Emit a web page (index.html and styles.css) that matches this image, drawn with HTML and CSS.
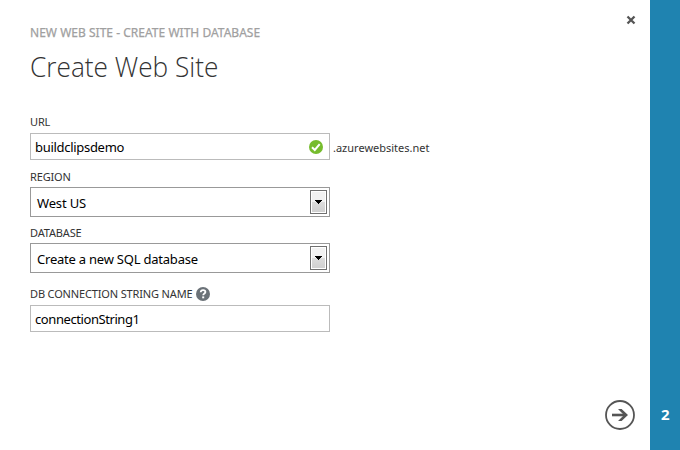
FILE: index.html
```html
<!DOCTYPE html>
<html lang="en">
<head>
<meta charset="utf-8">
<title>Create Web Site</title>
<link rel="stylesheet" href="styles.css">
</head>
<body>
<div class="wizard">
  <main class="panel">
    <button class="close" aria-label="Close">
      <svg width="10" height="10" viewBox="0 0 10 10"><path d="M1.5 1.5l7 7M8.5 1.5l-7 7" fill="none" stroke="#555" stroke-width="2.3"/></svg>
    </button>
    <p class="crumb">NEW WEB SITE - CREATE WITH DATABASE</p>
    <h1 class="title">Create Web Site</h1>
    <div class="label">URL</div>
    <div class="row">
      <div class="box input">
        <span class="v-url">buildclipsdemo</span>
        <svg width="14" height="14" viewBox="0 0 14 14"><circle cx="7" cy="7" r="7" fill="#76bc2d"/><path d="M3 7.2l2.8 2.8L10.7 4.2" fill="none" stroke="#fff" stroke-width="2"/></svg>
      </div>
      <span class="suffix">.azurewebsites.net</span>
    </div>
    <div class="label">REGION</div>
    <div class="box select">
      <span class="v-region">West US</span>
      <span class="drop"><svg width="7" height="4" viewBox="0 0 7 4" shape-rendering="crispEdges"><path d="M0 0h7v1H6v1H5v1H4v1H3V3H2V2H1V1H0z"/></svg></span>
    </div>
    <div class="label label-db">DATABASE</div>
    <div class="box select">
      <span class="v-db">Create a new SQL database</span>
      <span class="drop"><svg width="7" height="4" viewBox="0 0 7 4" shape-rendering="crispEdges"><path d="M0 0h7v1H6v1H5v1H4v1H3V3H2V2H1V1H0z"/></svg></span>
    </div>
    <div class="label label-help"><span>DB CONNECTION STRING NAME</span>
      <svg width="14" height="14" viewBox="0 0 14 14"><circle cx="7" cy="7" r="7" fill="#6b7278"/><path d="M4.7 5.3C4.8 3.6 6 3.1 7.1 3.1c1.4 0 2.3.8 2.3 1.9C9.4 6.5 7.2 6.5 7.2 8.3" fill="none" stroke="#fff" stroke-width="1.8"/><path d="M6.2 9.4h2v1.9h-2z" fill="#fff"/></svg>
    </div>
    <div class="box input"><span class="v-conn">connectionString1</span></div>
    <button class="next" aria-label="Next">
      <svg width="30" height="30" viewBox="0 0 30 30"><circle cx="15" cy="15" r="14" fill="none" stroke="#555" stroke-width="1.8"/><path d="M7 15h14" stroke="#555" stroke-width="2.6"/><path d="M13 9h3.6l6.4 6-6.4 6H13l6-6z" fill="#555"/></svg>
    </button>
  </main>
  <aside class="step">2</aside>
</div>
</body>
</html>
```
FILE: styles.css
```css
* { box-sizing: border-box; }
body { margin: 0; background: #fff; font-family: "Noto Sans", "Open Sans", sans-serif; color: #333; }
.wizard { display: flex; width: 680px; height: 450px; }
.panel { position: relative; flex: 1; padding: 24px 0 0 30px; white-space: nowrap; }
.step { width: 30px; background: #1f83b0; color: #fff; font-size: 15px; font-weight: 700; line-height: 20px; padding: 404px 0 0 11px; }
button { position: absolute; padding: 0; border: 0; background: none; line-height: 0; }
.close { left: 626px; top: 15px; }
.next { left: 605px; top: 400px; }
.crumb { margin: 0; font-size: 12px; line-height: 17px; letter-spacing: .02px; color: #a0a0a0; -webkit-text-stroke: .25px #a0a0a0; }
.title { margin: 4px 0 0; height: 43px; font: 300 28px/42px "Open Sans", sans-serif; color: #333; transform: scaleX(.937); transform-origin: 0 0; }
.label { height: 18px; margin-top: 9px; font-size: 11px; line-height: 16px; letter-spacing: -.15px; }
.title + .label { margin-top: 26px; height: 19px; }
.label-db { margin-top: 8px; }
.row { display: flex; align-items: center; gap: 3px; }
.suffix { font-size: 11px; padding-top: 2px; }
.box { display: flex; align-items: center; justify-content: space-between; width: 300px; border: 1px solid #bbb; font-size: 13px; color: #000; }
.input { height: 27px; padding: 1px 6px 0 4px; }
.select { height: 30px; padding: 2px 2px 0 6px; border-color: #999; }
.v-url { letter-spacing: -.3px; }
.v-region { letter-spacing: -.15px; }
.v-db { letter-spacing: -.22px; }
.v-conn { letter-spacing: -.42px; }
.drop { display: flex; align-items: center; justify-content: center; width: 17px; height: 24px; margin-top: -2px; border: 1px solid #707070; box-shadow: inset 0 0 0 1px #fff; background: linear-gradient(#f2f2f2 0 50%, #ddd 50%, #cfcfcf); }
.label-help { display: flex; align-items: center; gap: 3px; height: 18px; margin-top: 13px; padding-bottom: 2px; margin-bottom: 1px; }
```
